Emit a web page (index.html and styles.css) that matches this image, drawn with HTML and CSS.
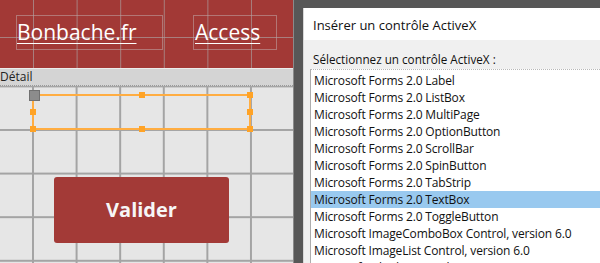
FILE: index.html
```html
<!DOCTYPE html>
<html>
<head>
<meta charset="utf-8">
<title>Insérer un contrôle ActiveX</title>
<link rel="stylesheet" href="styles.css">
</head>
<body>
<div class="screen">
    <div class="form-design">
        <div class="form-header">
            <div class="label-box label-site"><span>Bonbache.fr</span></div>
            <div class="label-box label-app"><span>Access</span></div>
        </div>
        <div class="section-bar">Détail</div>
        <div class="form-detail">
            <div class="textbox-ctrl">
                <span class="move-handle"></span>
                <span class="handle h-tm"></span>
                <span class="handle h-tr"></span>
                <span class="handle h-ml"></span>
                <span class="handle h-mr"></span>
                <span class="handle h-bl"></span>
                <span class="handle h-bm"></span>
                <span class="handle h-br"></span>
            </div>
            <div class="btn-valider">Valider</div>
        </div>
    </div>

    <div class="frame">
        <div class="dialog">
            <div class="dialog-title">Insérer un contrôle ActiveX</div>
            <div class="dialog-body">
                <div class="prompt">Sélectionnez un contrôle ActiveX :</div>
                <ul class="control-list">
                    <li>Microsoft Forms 2.0 Label</li>
                    <li>Microsoft Forms 2.0 ListBox</li>
                    <li>Microsoft Forms 2.0 MultiPage</li>
                    <li>Microsoft Forms 2.0 OptionButton</li>
                    <li>Microsoft Forms 2.0 ScrollBar</li>
                    <li>Microsoft Forms 2.0 SpinButton</li>
                    <li>Microsoft Forms 2.0 TabStrip</li>
                    <li class="selected">Microsoft Forms 2.0 TextBox</li>
                    <li>Microsoft Forms 2.0 ToggleButton</li>
                    <li>Microsoft ImageComboBox Control, version 6.0</li>
                    <li>Microsoft ImageList Control, version 6.0</li>
                    <li>Microsoft InkEdit Control</li>
                </ul>
            </div>
        </div>
    </div>
</div>
</body>
</html>
```

FILE: styles.css
```css
/* page */
body {
    margin: 0;
    font-family: 'Open Sans', 'Noto Sans', sans-serif;
    background: #575757;
    overflow: hidden;
}

.screen {
    display: flex;
    width: 600px;
    height: 263px;
    overflow: hidden;
}

/* partie formulaire Access */
.form-design {
    width: 293px;
    flex: none;
    display: flex;
    flex-direction: column;
    background: #e6e6e6;
}

.form-header {
    height: 68px;
    box-sizing: border-box;
    padding: 15px 0 0 16px;
    display: flex;
    gap: 30px;
    align-items: flex-start;
    background-color: #a23936;
    background-image:
        linear-gradient(to right, rgba(170, 150, 150, 0.75) 1px, transparent 1px),
        linear-gradient(to bottom, rgba(170, 150, 150, 0.75) 1px, transparent 1px);
    background-size: 43.6px 43.6px;
    background-position: 33px 37px;
}

.label-box {
    height: 35px;
    box-sizing: border-box;
    border: 1px solid rgba(190, 160, 160, 0.6);
    color: #fff;
    font-size: 21px;
    line-height: 33px;
    text-decoration: underline;
    text-decoration-thickness: 1px;
    text-underline-offset: 3px;
}

.label-site {
    width: 147px;
}

.label-app {
    width: 84px;
    padding-left: 1px;
}

.section-bar {
    height: 18px;
    box-sizing: border-box;
    background: #d4d4d4;
    border-top: 1px solid #ececec;
    border-bottom: 1px dotted #9a9a9a;
    color: #222;
    font-size: 12px;
    line-height: 16px;
}

.form-detail {
    flex: 1;
    padding-top: 8px;
    background-color: #e6e6e6;
    background-image:
        linear-gradient(to right, #a4a4a4 2px, transparent 2px),
        linear-gradient(to bottom, #a4a4a4 2px, transparent 2px);
    background-size: 43.6px 43.6px;
    background-position: 32px 43px;
}

/* zone de texte selectionnee */
.textbox-ctrl {
    position: relative;
    margin-left: 32px;
    width: 219px;
    height: 36px;
    box-sizing: border-box;
    border: 2px solid #ffad42;
}

.handle {
    position: absolute;
    width: 6px;
    height: 6px;
    background: #ffa326;
}

.h-tm { left: 105px; top: -4px; }
.h-tr { right: -4px; top: -4px; }
.h-ml { left: -4px; top: 13px; }
.h-mr { right: -4px; top: 13px; }
.h-bl { left: -4px; bottom: -4px; }
.h-bm { left: 105px; bottom: -4px; }
.h-br { right: -4px; bottom: -4px; }

.move-handle {
    position: absolute;
    left: -5px;
    top: -6px;
    width: 9px;
    height: 9px;
    background: #8c8c8c;
    border: 1px solid #707070;
}

/* bouton */
.btn-valider {
    margin: 47px 0 0 54px;
    width: 175px;
    height: 66px;
    border-radius: 3px;
    background: #a33a37;
    color: #f6f6f6;
    font-size: 20px;
    font-weight: bold;
    line-height: 66px;
    text-align: center;
}

/* boite de dialogue */
.frame {
    flex: 1;
    padding: 8px 0 0 9px;
    background: #575757;
    border-left: 1px solid #8a8a8a;
}

.dialog {
    height: 100%;
    background: #f0f0f0;
    border-left: 1px solid #d8d8d8;
}

.dialog-title {
    height: 32px;
    box-sizing: border-box;
    padding: 3px 0 0 9px;
    background: #fff;
    font-size: 13px;
    line-height: 28px;
    color: #111;
}

.dialog-body {
    padding: 0 0 0 6px;
}

.prompt {
    height: 29px;
    padding-left: 3px;
    font-size: 11.7px;
    line-height: 38px;
    color: #111;
}

.control-list {
    list-style: none;
    margin: 0;
    padding: 2px 0 0 0;
    background: #fff;
    border-top: 1px dotted #b8b8b8;
    border-left: 1px solid #adadad;
}

.control-list li {
    height: 17px;
    padding-left: 3px;
    font-size: 12px;
    letter-spacing: -0.15px;
    line-height: 17px;
    color: #111;
    white-space: nowrap;
}

.control-list li.selected {
    background: #99c9ef;
}
```
